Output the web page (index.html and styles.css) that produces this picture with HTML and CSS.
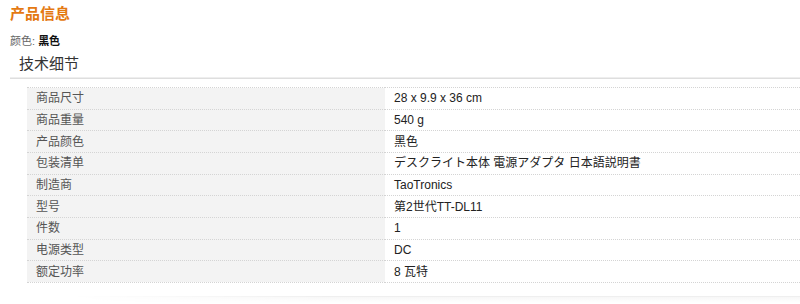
FILE: index.html
```html
<!DOCTYPE html>
<html lang="zh">
<head>
<meta charset="utf-8">
<link rel="stylesheet" href="styles.css">
</head>
<body>
<div class="page">
  <h2 class="title">产品信息</h2>
  <div class="color-line"><span class="color-label">颜色:</span> <b class="color-value">黑色</b></div>
  <h3 class="tech">技术细节</h3>
  <div class="rule"></div>
  <table class="specs">
    <tr><td class="k">商品尺寸</td><td class="v">28 x 9.9 x 36 cm</td></tr>
    <tr><td class="k">商品重量</td><td class="v">540 g</td></tr>
    <tr><td class="k">产品颜色</td><td class="v">黑色</td></tr>
    <tr><td class="k">包装清单</td><td class="v">デスクライト本体 電源アダプタ 日本語説明書</td></tr>
    <tr><td class="k">制造商</td><td class="v">TaoTronics</td></tr>
    <tr><td class="k">型号</td><td class="v">第2世代TT-DL11</td></tr>
    <tr><td class="k">件数</td><td class="v">1</td></tr>
    <tr><td class="k">电源类型</td><td class="v">DC</td></tr>
    <tr><td class="k">额定功率</td><td class="v">8 瓦特</td></tr>
  </table>
  <div class="shadow"></div>
</div>
</body>
</html>
```

FILE: styles.css
```css
html, body {
  margin: 0;
  padding: 0;
  background: #fff;
}
body {
  font-family: "Liberation Sans", Arial, "Noto Sans CJK SC", sans-serif;
  color: #333;
  overflow: hidden;
}
.page {
  padding-left: 10px;
  padding-top: 4px;
}
.title {
  margin: 0;
  font-size: 15px;
  line-height: 20px;
  font-weight: bold;
  color: #e47911;
}
.color-line {
  margin-top: 10px;
  font-size: 11px;
  line-height: 15px;
}
.color-label {
  color: #666;
}
.color-value {
  color: #111;
  font-weight: bold;
}
.tech {
  margin: 5px 0 0 0;
  padding-left: 9px;
  font-size: 15px;
  line-height: 20px;
  font-weight: normal;
  color: #333;
}
.rule {
  margin-top: 3px;
  height: 1px;
  border-top: 1px solid #eeeeee;
  background: #dedede;
}
.specs {
  margin-top: 8px;
  margin-left: 17px;
  width: calc(100% - 17px);
  border-collapse: collapse;
  font-size: 12px;
  border-top: 1px dotted #d4d4d4;
}
.specs td {
  height: 20.67px;
  padding: 0 9px;
  border-bottom: 1px dotted #d4d4d4;
  vertical-align: middle;
  line-height: 14px;
}
.specs .k {
  width: 340px;
  background: #f3f3f3;
  color: #555;
}
.specs .v {
  background: #fff;
  color: #222;
}
.shadow {
  margin-top: 13px;
  height: 6px;
  border-top: 1px solid #efefef;
  background: linear-gradient(#f7f7f7, #fff);
  -webkit-mask-image: linear-gradient(to right, transparent 60px, #000 320px);
  mask-image: linear-gradient(to right, transparent 60px, #000 320px);
}
```
